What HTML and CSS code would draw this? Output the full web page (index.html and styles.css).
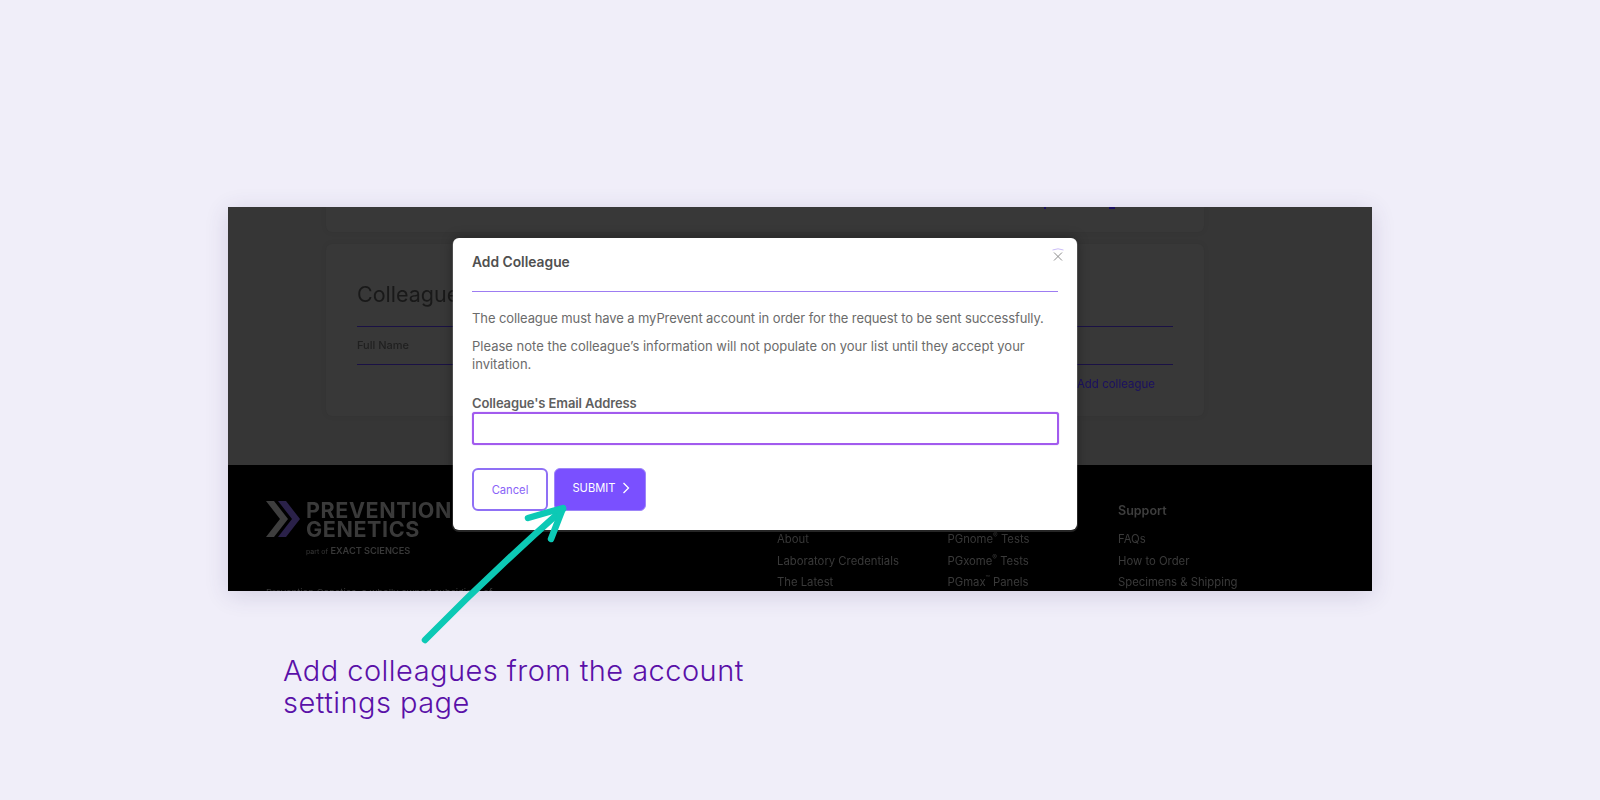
FILE: index.html
```html
<!DOCTYPE html>
<html lang="en">
<head>
<meta charset="utf-8">
<title>Add Colleague</title>
<link rel="stylesheet" href="styles.css">
</head>
<body>
<main class="stage">
  <section class="frame">
    <div class="page">
      <div class="content">
        <div class="card card-top"><i class="clip-mark"></i><i class="clip-mark wide"></i></div>
        <div class="card card-colleagues">
          <h2 class="card-title">Colleagues</h2>
          <div class="table-row"><span class="col-name">Full Name</span></div>
          <div class="card-action"><span class="add-link">Add colleague</span></div>
        </div>
      </div>
      <footer class="footer">
        <div class="brand">
          <div class="logo">
            <svg class="logo-mark" viewBox="0 0 35 36" width="35" height="36" aria-hidden="true">
              <path class="chev-grey" d="M0 0h8l14 18L8 36H0l14-18z"/>
              <path class="chev-purple" d="M12 0h8l14 18-14 18h-8l14-18z"/>
            </svg>
            <div class="logo-text"><span>PREVENTION</span><span>GENETICS</span></div>
          </div>
          <div class="logo-sub"><small>part of</small> EXACT SCIENCES</div>
          <div class="legal">Prevention Genetics, a wholly owned subsidiary of</div>
        </div>
        <div class="foot-col"><h4 class="foot-head">Company</h4><a>About</a><a>Laboratory Credentials</a><a>The Latest</a></div>
        <div class="foot-col"><h4 class="foot-head">Tests</h4><a>PGnome<sup>®</sup> Tests</a><a>PGxome<sup>®</sup> Tests</a><a>PGmax<sup>™</sup> Panels</a></div>
        <div class="foot-col"><h4 class="foot-head">Support</h4><a>FAQs</a><a>How to Order</a><a>Specimens &amp; Shipping</a></div>
      </footer>
    </div>
    <div class="modal">
      <div class="modal-head">
        <h3 class="modal-title">Add Colleague</h3>
        <svg class="close" viewBox="0 0 14 16" width="14" height="16" aria-hidden="true">
          <path class="close-arc" d="M1.5 3 Q7 0.6 12.5 3"/>
          <path class="close-x" d="M3 5.5l8 8M11 5.5l-8 8"/>
        </svg>
      </div>
      <p class="modal-text first">The colleague must have a myPrevent account in order for the request to be sent successfully.</p>
      <p class="modal-text">Please note the colleague’s information will not populate on your list until they accept your invitation.</p>
      <label class="field-label" for="email">Colleague's Email Address</label>
      <input class="field-input" id="email" type="text">
      <div class="modal-actions">
        <button class="btn-cancel" type="button">Cancel</button>
        <button class="btn-submit" type="button">SUBMIT
          <svg viewBox="0 0 8 12" width="8" height="12" aria-hidden="true"><path d="M1.5 1l5 5-5 5"/></svg>
        </button>
      </div>
    </div>
  </section>
  <p class="caption">Add colleagues from the account<br>settings page</p>
  <svg class="arrow" viewBox="0 0 160 150" width="160" height="150" aria-hidden="true">
    <path d="M5 142 Q70 76 143 11"/>
    <path d="M108 20 L143 10 L131 41"/>
  </svg>
</main>
</body>
</html>
```
FILE: styles.css
```css
* { box-sizing: border-box; }
html, body { margin: 0; height: 100%; }
body {
  background: #f0eef9;
  font-family: Inter, "Noto Sans", "Liberation Sans", sans-serif;
  overflow: hidden;
}
.stage {
  position: relative;
  height: 800px;
  padding: 207px 0 0 228px;
}
.frame {
  position: relative;
  width: 1144px;
  height: 384px;
  overflow: hidden;
  box-shadow: 0 4px 22px rgba(60, 50, 110, .16);
}
.page {
  height: 100%;
  background: #363636;
  display: flex;
  flex-direction: column;
  filter: blur(.45px);
}
.content {
  height: 258px;
  padding: 0 168px 0 98px;
  display: flex;
  flex-direction: column;
  gap: 12px;
  flex: none;
}
.card {
  background: #383838;
  border-radius: 6px;
  box-shadow: 0 0 6px rgba(0, 0, 0, .06);
}
.card-top {
  height: 25px;
  border-radius: 0 0 6px 6px;
  display: flex;
  align-items: flex-start;
  gap: 63px;
  padding-left: 718px;
}
.clip-mark { width: 2px; height: 2px; background: #1b1060; }
.clip-mark.wide { width: 6px; }
.card-colleagues {
  height: 172px;
  padding: 36px 31px 0;
}
.card-title {
  margin: 0;
  height: 47px;
  font-size: 21.5px;
  line-height: 28px;
  font-weight: 400;
  color: #191919;
  border-bottom: 1px solid #1a1145;
}
.table-row {
  height: 37.5px;
  display: flex;
  align-items: center;
  border-bottom: 1px solid #1a1145;
}
.col-name { font-size: 11px; font-weight: 500; color: #202020; }
.card-action {
  display: flex;
  justify-content: flex-end;
  padding: 11.5px 18px 0 0;
}
.add-link { font-size: 11.5px; line-height: 16px; color: #1b1060; }
.footer {
  flex: 1;
  background: #000;
  position: relative;
  display: flex;
  padding: 36px 0 0 38px;
}
.brand { width: 511px; flex: none; }
.logo { display: flex; gap: 5px; height: 37px; }
.logo-mark { flex: none; }
.chev-grey { fill: #3e3e3e; }
.chev-purple { fill: #2a2149; }
.logo-text {
  display: flex;
  flex-direction: column;
  font-weight: 700;
  font-size: 21.5px;
  line-height: 18.5px;
  letter-spacing: .6px;
  color: #3a3a3a;
  white-space: nowrap;
}
.logo-sub {
  margin: 7px 0 0 40px;
  font-size: 9.2px;
  line-height: 12px;
  font-weight: 600;
  color: #383838;
}
.logo-sub small { font-size: 7px; font-weight: 400; }
.legal { margin-top: 28px; font-size: 9.5px; line-height: 14px; color: #383838; white-space: nowrap; }
.foot-col {
  width: 170.5px;
  flex: none;
  display: flex;
  flex-direction: column;
  font-size: 11.3px;
  color: #3a3a3a;
}
.foot-col a { height: 21.5px; line-height: 21.5px; white-space: nowrap; }
.foot-col sup { font-size: 7px; line-height: 0; }
.foot-head {
  margin: 1px 0 9px;
  font-size: 12.5px;
  line-height: 18px;
  font-weight: 600;
  color: #3e3e3e;
}
.modal {
  position: absolute;
  left: 225px;
  top: 31px;
  width: 624px;
  height: 292px;
  padding: 0 19px;
  background: #fff;
  border-radius: 6px;
  box-shadow: 0 1px 0 1px rgba(255, 255, 255, .15), 0 0 12px rgba(0, 0, 0, .35);
  color: #6b6b6b;
}
.modal-head {
  position: relative;
  height: 54px;
  padding-top: 15px;
  border-bottom: 1px solid #9d7cf2;
}
.modal-title { margin: 0; font-size: 13.8px; line-height: 18px; font-weight: 600; color: #505050; }
.close { position: absolute; right: -7px; top: 9px; fill: none; }
.close-arc { stroke: #cbbdf8; stroke-width: 1; }
.close-x { stroke: #8c8c8c; stroke-width: 1; }
.modal-text { margin: 0; font-size: 13px; line-height: 18px; }
.modal-text.first { margin: 17px 0 10px; letter-spacing: -.1px; }
.field-label {
  display: block;
  margin-top: 22px;
  font-size: 13px;
  line-height: 16px;
  font-weight: 600;
  letter-spacing: -.1px;
  color: #5f5f5f;
}
.field-input {
  display: block;
  width: calc(100% + 1px);
  height: 33px;
  margin-top: 1px;
  border: 2px solid #a25bee;
  border-radius: 3px;
  background: #fff;
  outline: 0;
  box-shadow: 0 0 1px #a25bee;
}
.modal-actions { display: flex; gap: 6px; margin-top: 23px; }
.btn-cancel, .btn-submit {
  height: 43px;
  border-radius: 6px;
  font: inherit;
}
.btn-cancel {
  width: 76px;
  font-size: 11.2px;
  border: 2px solid #8f70f5;
  background: #fff;
  color: #8a63f8;
}
.btn-submit {
  width: 92px;
  padding: 0 0 3px 2px;
  font-size: 11.2px;
  border: 1px solid #9d85f8;
  background: #7a50ff;
  color: #fff;
  display: flex;
  align-items: center;
  justify-content: center;
  gap: 6px;
  font-weight: 400;
}
.btn-submit svg { fill: none; stroke: #fff; stroke-width: 1.3; }
.caption {
  margin: 64px 0 0 55px;
  font-size: 29px;
  line-height: 32px;
  font-weight: 300;
  letter-spacing: .46px;
  color: #5a10a8;
}
.arrow {
  position: absolute;
  left: 420px;
  top: 498px;
  fill: none;
  stroke: #0cc9b5;
  stroke-width: 6.5;
  stroke-linecap: round;
  stroke-linejoin: round;
}
```
